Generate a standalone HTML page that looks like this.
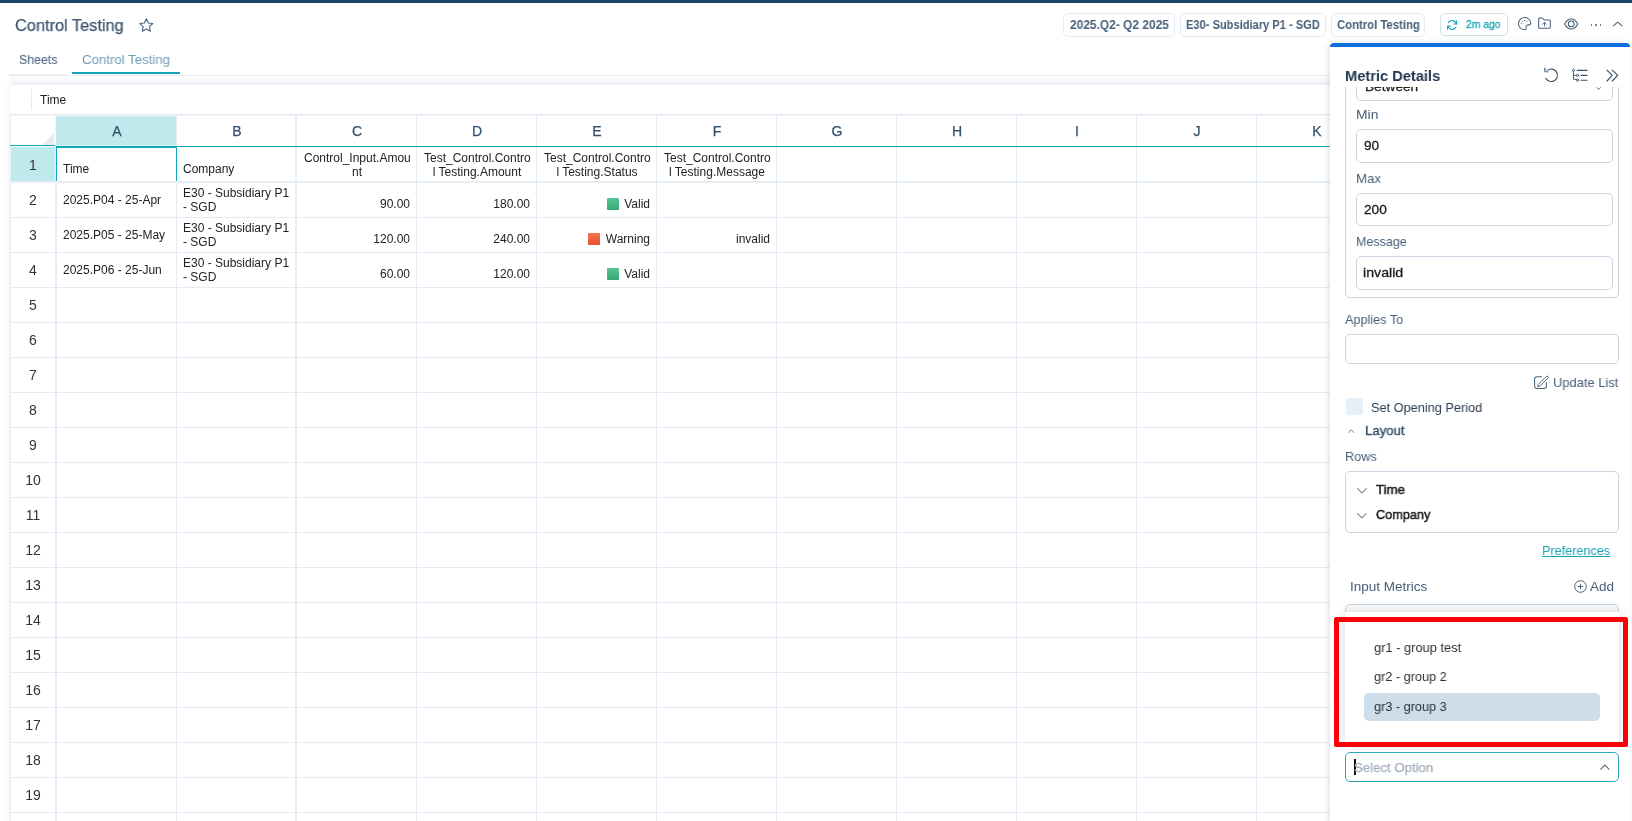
<!DOCTYPE html>
<html><head><meta charset="utf-8"><title>Control Testing</title>
<style>
html,body{margin:0;padding:0}
body{width:1632px;height:821px;overflow:hidden;position:relative;background:#fff;font-family:"Liberation Sans",sans-serif;color:#3f5a74}
.abs{position:absolute}
.t{position:absolute;white-space:nowrap;line-height:1;will-change:transform}
#topbar{left:0;top:0;width:1632px;height:3px;background:#1b4565}
.chip{position:absolute;top:13px;height:22px;border:1px solid #e3ecf5;border-radius:5px;background:#fff}
.chip .t{font-weight:bold;font-size:12.5px;color:#46607a;top:6px}
/* sheet */
#sheet{left:10px;top:85px;width:1330px;height:740px;background:#fff;box-shadow:0 0 9px rgba(120,150,180,.17)}
.vl{position:absolute;top:115px;width:1px;height:710px;background:#e3ecf5}
.hl{position:absolute;left:10px;width:1325px;height:1px;background:#e3ecf5}
.ch{will-change:transform;position:absolute;top:124px;width:120px;text-align:center;font-size:14px;color:#34506c;line-height:14px;-webkit-text-stroke:.25px #34506c;margin-left:.5px}
.rh{will-change:transform;position:absolute;left:11px;width:44px;text-align:center;font-size:14px;color:#333;line-height:14px}
.c{will-change:transform;position:absolute;font-size:12px;line-height:14px;color:#222;width:106px;white-space:nowrap}
.c.r{text-align:right;margin-left:1px}
.c.m{text-align:center;margin-left:1px}
/* panel */
#panel{left:1330px;top:43px;width:300px;height:790px;background:#fff;border-radius:5px 5px 0 0;box-shadow:-2px 0 6px rgba(100,130,160,.22);box-sizing:border-box}
.lab{position:absolute;white-space:nowrap;line-height:1;font-size:13.5px;color:#46607a}
.inp{position:absolute;box-sizing:border-box;border:1px solid #c9d6e2;border-radius:5px;background:#fff}
.val{position:absolute;white-space:nowrap;line-height:1;font-size:13.5px;color:#222;font-weight:500}
svg{position:absolute;overflow:visible}
</style></head><body>
<div id="topbar" class="abs"></div>

<div id="t1" class="t" style="left:14.85px;top:18.00px;font-size:16.75px;line-height:16.75px;color:#3d5873;-webkit-text-stroke:0.25px #3d5873;transform:scaleX(0.9757);transform-origin:0 0;">Control Testing</div>
<svg style="left:139.300px;top:17.700px" width="14.700" height="14.700" viewBox="0 0 14 14" fill="none" stroke="#46607a" stroke-width="1" stroke-linejoin="round"><path d="M7 .8l1.900 4 4.300.5-3.200 3 .85 4.300L7 10.500 3.150 12.600 4 8.300.8 5.300l4.300-.5z"/></svg>
<div id="t2" class="t" style="left:19.09px;top:53.00px;font-size:13.5px;line-height:13.5px;color:#536c85;-webkit-text-stroke:0.1px #536c85;transform:scaleX(0.9160);transform-origin:0 0;">Sheets</div>
<div id="t3" class="t" style="left:82.13px;top:53.00px;font-size:13.5px;line-height:13.5px;color:#6f9cb8;transform:scaleX(0.9805);transform-origin:0 0;">Control Testing</div>
<div class="abs" style="left:9px;top:74px;width:58px;height:2px;background:#e9eef5"></div>
<div class="abs" style="left:67px;top:75px;width:1263px;height:1px;background:#e9eff5"></div>
<div class="abs" style="left:72px;top:72px;width:108px;height:2px;background:#12a5b9"></div>
<div class="abs" style="left:10px;top:76px;width:1320px;height:9px;background:linear-gradient(#fefefe,#f6f8fa)"></div>
<div class="chip" style="left:1063px;width:110px"></div>
<div id="t4" class="t" style="left:1069.74px;top:19.00px;font-size:12.5px;line-height:12.5px;color:#46607a;font-weight:bold;transform:scaleX(0.9550);transform-origin:0 0;">2025.Q2- Q2 2025</div>
<div class="chip" style="left:1180px;width:144px"></div>
<div id="t5" class="t" style="left:1185.65px;top:19.00px;font-size:12.5px;line-height:12.5px;color:#46607a;font-weight:bold;transform:scaleX(0.8876);transform-origin:0 0;">E30- Subsidiary P1 - SGD</div>
<div class="chip" style="left:1331px;width:92px"></div>
<div id="t6" class="t" style="left:1336.81px;top:19.00px;font-size:12.5px;line-height:12.5px;color:#46607a;font-weight:bold;transform:scaleX(0.9060);transform-origin:0 0;">Control Testing</div>
<div class="chip" style="left:1440px;width:66px;height:20.600px;border-color:#d0e0e9"></div>
<div id="t7" class="t" style="left:1466.21px;top:19.00px;font-size:11.5px;line-height:11.5px;color:#17a5b8;-webkit-text-stroke:0.3px #17a5b8;transform:scaleX(0.8982);transform-origin:0 0;">2m ago</div>
<svg style="left:1446px;top:19px" width="12" height="12" viewBox="0 0 12 12" fill="none" stroke="#17a5b8" stroke-width="1.1" stroke-linecap="round" stroke-linejoin="round"><path d="M10.300 5A4.400 4.400 0 0 0 2.300 3.600M1.900 7A4.400 4.400 0 0 0 9.900 8.400"/><path d="M10.600 1.800V5H7.600M1.600 10.200V7h3"/></svg>
<svg style="left:1517.7px;top:17.4px" width="14" height="14" viewBox="0 0 14 14" fill="none" stroke="#46607a" stroke-width="1.05" stroke-linecap="round" stroke-linejoin="round"><path d="M6.300 12.800A6.150 6.150 0 1 1 12.800 6.900C12.500 8.300 10.500 7.600 8.800 8.200 7.200 8.900 8.600 10.600 8 11.900 7.700 12.600 7 12.800 6.300 12.800z"/><circle cx="3.300" cy="6.600" r=".55" fill="#46607a" stroke="none"/><circle cx="4.500" cy="4.300" r=".55" fill="#46607a" stroke="none"/><circle cx="6.700" cy="3.400" r=".55" fill="#46607a" stroke="none"/><circle cx="9" cy="4.200" r=".55" fill="#46607a" stroke="none"/></svg>
<svg style="left:1538px;top:17px" width="13" height="12" viewBox="0 0 13 12" fill="none" stroke="#46607a" stroke-width="1.05" stroke-linecap="round" stroke-linejoin="round"><path d="M.7 1.900Q.7 .9 1.700 .9H4.200L6.300 3H11.300Q12.300 3 12.300 4V10.300Q12.300 11.300 11.300 11.300H1.700Q.7 11.300 .7 10.300z"/><path d="M6.500 9V5.600M4.700 7.200L6.500 5.400 8.300 7.200" stroke-width=".9"/></svg>
<svg style="left:1564px;top:18px" width="15" height="12" viewBox="0 0 15 12" fill="none" stroke="#46607a" stroke-width="1.05" stroke-linecap="round" stroke-linejoin="round"><path d="M.7 5.900C2.500 2.300 5 .9 7.200 .9S11.900 2.300 13.700 5.900C11.900 9.500 9.400 10.900 7.200 10.900S2.500 9.500 .7 5.900z"/><circle cx="7.200" cy="5.900" r="2.900"/></svg>
<div class="abs" style="left:1590.5px;top:23.9px;width:1.7px;height:1.7px;border-radius:1px;background:#46607a"></div>
<div class="abs" style="left:1595.15px;top:23.9px;width:1.7px;height:1.7px;border-radius:1px;background:#46607a"></div>
<div class="abs" style="left:1599.8px;top:23.9px;width:1.7px;height:1.7px;border-radius:1px;background:#46607a"></div>
<svg style="left:1612px;top:21px" width="12" height="6" viewBox="0 0 12 6" fill="none" stroke="#46607a" stroke-width="1.05" stroke-linecap="round" stroke-linejoin="round"><path d="M1.300 4.800L5.700 1.100l4.400 3.700"/></svg>
<div id="sheet" class="abs"></div>
<div class="abs" style="left:31px;top:89px;width:1px;height:21px;background:#e3ecf5"></div>
<div class="t" style="left:40px;top:94px;font-size:12px;color:#222;line-height:12px">Time</div>
<div class="abs" style="left:10px;top:114px;width:1325px;height:1px;background:#e1eaf3"></div><div class="abs" style="left:10px;top:115px;width:1325px;height:1px;background:#f3f7fa"></div>
<div class="abs" style="left:56px;top:116px;width:120px;height:29px;background:#bfe9ed"></div><div class="abs" style="left:56px;top:145px;width:120px;height:1px;background:#d4f0f3"></div>
<div class="abs" style="left:11px;top:147px;width:44px;height:34px;background:#bfe9ed"></div>
<svg style="left:42.400px;top:132.700px" width="12" height="12" viewBox="0 0 12 12"><path d="M12 0V12H0z" fill="#e7ecf4"/></svg>
<div class="vl" style="left:55px;width:1px;background:#f1f5f9;height:32px"></div><div class="vl" style="left:55px;top:147px;width:2px;background:#e4edf5"></div><div class="vl" style="left:10px;width:1px;background:#e6eff6"></div>
<div class="vl" style="left:176px"></div>
<div class="vl" style="left:295px;width:2px;background:#e6eff6"></div>
<div class="vl" style="left:416px"></div>
<div class="vl" style="left:536px"></div>
<div class="vl" style="left:656px"></div>
<div class="vl" style="left:776px"></div>
<div class="vl" style="left:896px"></div>
<div class="vl" style="left:1016px"></div>
<div class="vl" style="left:1136px"></div>
<div class="vl" style="left:1256px"></div>
<div class="hl" style="top:181px;height:2px;background:#e6eff6"></div>
<div class="hl" style="top:217px"></div>
<div class="hl" style="top:252px"></div>
<div class="hl" style="top:287px"></div>
<div class="hl" style="top:322px"></div>
<div class="hl" style="top:357px"></div>
<div class="hl" style="top:392px"></div>
<div class="hl" style="top:427px"></div>
<div class="hl" style="top:462px"></div>
<div class="hl" style="top:497px"></div>
<div class="hl" style="top:532px"></div>
<div class="hl" style="top:567px"></div>
<div class="hl" style="top:602px"></div>
<div class="hl" style="top:637px"></div>
<div class="hl" style="top:672px"></div>
<div class="hl" style="top:707px"></div>
<div class="hl" style="top:742px"></div>
<div class="hl" style="top:777px"></div>
<div class="hl" style="top:812px"></div>
<div class="abs" style="left:10px;top:145px;width:45px;height:1px;background:#12a5b9"></div>
<div class="abs" style="left:56px;top:146px;width:1280px;height:1px;background:#12a5b9"></div>
<div class="abs" style="left:56px;top:146px;width:121px;height:35px;box-sizing:border-box;border:1.3px solid #12a5b9;border-top-width:2px;border-bottom:none"></div>
<div class="ch" style="left:56px">A</div>
<div class="ch" style="left:176px">B</div>
<div class="ch" style="left:296px">C</div>
<div class="ch" style="left:416px">D</div>
<div class="ch" style="left:536px">E</div>
<div class="ch" style="left:656px">F</div>
<div class="ch" style="left:776px">G</div>
<div class="ch" style="left:896px">H</div>
<div class="ch" style="left:1016px">I</div>
<div class="ch" style="left:1136px">J</div>
<div class="ch" style="left:1256px">K</div>
<div class="rh" style="top:158px">1</div>
<div class="rh" style="top:193px">2</div>
<div class="rh" style="top:228px">3</div>
<div class="rh" style="top:263px">4</div>
<div class="rh" style="top:298px">5</div>
<div class="rh" style="top:333px">6</div>
<div class="rh" style="top:368px">7</div>
<div class="rh" style="top:403px">8</div>
<div class="rh" style="top:438px">9</div>
<div class="rh" style="top:473px">10</div>
<div class="rh" style="top:508px">11</div>
<div class="rh" style="top:543px">12</div>
<div class="rh" style="top:578px">13</div>
<div class="rh" style="top:613px">14</div>
<div class="rh" style="top:648px">15</div>
<div class="rh" style="top:683px">16</div>
<div class="rh" style="top:718px">17</div>
<div class="rh" style="top:753px">18</div>
<div class="rh" style="top:788px">19</div>
<div class="c " style="left:63px;top:162px;">Time</div>
<div class="c " style="left:183px;top:162px;">Company</div>
<div class="c m" style="left:303px;top:151px;">Control_Input.Amou<br>nt</div>
<div class="c m" style="left:423px;top:151px;">Test_Control.Contro<br>l Testing.Amount</div>
<div class="c m" style="left:543px;top:151px;">Test_Control.Contro<br>l Testing.Status</div>
<div class="c m" style="left:663px;top:151px;">Test_Control.Contro<br>l Testing.Message</div>
<div class="c " style="left:63px;top:193px;">2025.P04 - 25-Apr</div>
<div class="c " style="left:183px;top:186px;">E30 - Subsidiary P1<br>- SGD</div>
<div class="c r" style="left:303px;top:197px;">90.00</div>
<div class="c r" style="left:423px;top:197px;">180.00</div>
<div class="c r" style="left:543px;top:197px;">Valid</div>
<div class="abs" style="left:607px;top:198px;width:12px;height:12px;border-radius:1px;background:linear-gradient(#56c596,#37a874)"></div>
<div class="c " style="left:63px;top:228px;">2025.P05 - 25-May</div>
<div class="c " style="left:183px;top:221px;">E30 - Subsidiary P1<br>- SGD</div>
<div class="c r" style="left:303px;top:232px;">120.00</div>
<div class="c r" style="left:423px;top:232px;">240.00</div>
<div class="c r" style="left:543px;top:232px;">Warning</div>
<div class="c r" style="left:663px;top:232px;">invalid</div>
<div class="abs" style="left:588px;top:233px;width:12px;height:12px;border-radius:1px;background:linear-gradient(#f4754b,#e8522f)"></div>
<div class="c " style="left:63px;top:263px;">2025.P06 - 25-Jun</div>
<div class="c " style="left:183px;top:256px;">E30 - Subsidiary P1<br>- SGD</div>
<div class="c r" style="left:303px;top:267px;">60.00</div>
<div class="c r" style="left:423px;top:267px;">120.00</div>
<div class="c r" style="left:543px;top:267px;">Valid</div>
<div class="abs" style="left:607px;top:268px;width:12px;height:12px;border-radius:1px;background:linear-gradient(#56c596,#37a874)"></div>
<div id="panel" class="abs"></div><div class="abs" style="left:1330px;top:43px;width:300px;height:4px;background:#0d6fdc;border-radius:5px 5px 0 0"></div>
<div class="abs" style="left:1630px;top:43px;width:2px;height:790px;background:#f8f9fb"></div>
<div id="t8" class="t" style="left:1344.77px;top:68.00px;font-size:15.5px;line-height:15.5px;color:#22384f;font-weight:bold;transform:scaleX(0.9445);transform-origin:0 0;">Metric Details</div>
<svg style="left:1543px;top:67.4px" width="16" height="15" viewBox="0 0 16 15" fill="none" stroke="#34506c" stroke-width="1.1" stroke-linecap="round" stroke-linejoin="round"><path d="M5.500 2.700A6.200 6.200 0 1 1 2.900 11.400"/><path d="M1.600 1.600V4.800H4.900z" stroke-width=".8"/></svg>
<svg style="left:1572px;top:68px" width="16" height="15" viewBox="0 0 16 15" fill="none" stroke="#34506c" stroke-width="1.1" stroke-linecap="round" stroke-linejoin="round"><path d="M5.300 2.400H15M9 7.400H15M9 12.200H15"/><path d="M1.500 3.600V11.300H4.300M1.500 7.400H4.300" stroke-width=".9"/><circle cx="1.500" cy="2.400" r="1.100" stroke-width=".9"/><circle cx="5.500" cy="7.400" r="1.100" stroke-width=".9"/><circle cx="5.500" cy="12.100" r="1.100" stroke-width=".9"/></svg>
<svg style="left:1606px;top:69px" width="13" height="13" viewBox="0 0 13 13" fill="none" stroke="#34506c" stroke-width="1.15" stroke-linecap="round" stroke-linejoin="round"><path d="M1 1.200l5.200 5.200L1 12M6.200 1.200l5.500 5.200L6.200 12"/></svg>
<div class="abs" style="left:1330px;top:87px;width:300px;height:740px;overflow:hidden">
<div class="inp" style="left:15px;top:-47px;width:274px;height:258px;border-color:#c5d3df"></div>
<div class="inp" style="left:26px;top:-27px;width:257px;height:41px"></div>
<div id="t9" class="t" style="left:34.60px;top:-7.00px;font-size:13.5px;line-height:13.5px;color:#222;-webkit-text-stroke:0.3px #222;transform:scaleX(1.0126);transform-origin:0 0;">Between</div>
<svg style="left:266px;top:-0.5px" width="5" height="3" viewBox="0 0 5 3" fill="none" stroke="#46607a" stroke-width=".9"><path d="M.4 .3L2.500 2.400 4.600 .3"/></svg>
<div id="t10" class="t" style="left:25.63px;top:21.00px;font-size:13.5px;line-height:13.5px;color:#46607a;transform:scaleX(1.0285);transform-origin:0 0;">Min</div>
<div class="inp" style="left:26px;top:42px;width:257px;height:34px"></div>
<div id="t11" class="t" style="left:34.47px;top:52.00px;font-size:13.5px;line-height:13.5px;color:#1c1c1c;-webkit-text-stroke:0.3px #1c1c1c;transform:scaleX(1.0055);transform-origin:0 0;">90</div>
<div id="t12" class="t" style="left:25.65px;top:85.00px;font-size:13.5px;line-height:13.5px;color:#46607a;transform:scaleX(0.9797);transform-origin:0 0;">Max</div>
<div class="inp" style="left:26px;top:106px;width:257px;height:33px"></div>
<div id="t13" class="t" style="left:33.77px;top:116.00px;font-size:13.5px;line-height:13.5px;color:#1c1c1c;-webkit-text-stroke:0.3px #1c1c1c;transform:scaleX(1.0107);transform-origin:0 0;">200</div>
<div id="t14" class="t" style="left:26.00px;top:148.00px;font-size:13.5px;line-height:13.5px;color:#46607a;transform:scaleX(0.9265);transform-origin:0 0;">Message</div>
<div class="inp" style="left:26px;top:169px;width:257px;height:34px"></div>
<div id="t15" class="t" style="left:33.44px;top:179.00px;font-size:13.5px;line-height:13.5px;color:#1c1c1c;-webkit-text-stroke:0.3px #1c1c1c;transform:scaleX(1.0516);transform-origin:0 0;">invalid</div>
<div id="t16" class="t" style="left:15.21px;top:226.00px;font-size:13.5px;line-height:13.5px;color:#46607a;transform:scaleX(0.9387);transform-origin:0 0;">Applies To</div>
<div class="inp" style="left:15px;top:247px;width:274px;height:30px"></div>
<svg style="left:204px;top:288px" width="15" height="14" viewBox="0 0 15 14" fill="none" stroke="#46607a" stroke-width="1.05" stroke-linecap="round" stroke-linejoin="round"><path d="M7.500 1.700H3Q.6 1.700 .6 4.100V11Q.6 13.400 3 13.400H10Q12.400 13.400 12.400 11V7.500"/><path d="M4.500 9.300L12.200 1.500Q13.100 .7 13.900 1.500T13.900 3.100L6.200 10.900 4.100 11.400z" stroke-width=".95"/></svg>
<div id="t17" class="t" style="left:223.44px;top:289.00px;font-size:13.5px;line-height:13.5px;color:#46607a;transform:scaleX(0.9575);transform-origin:0 0;">Update List</div>
<div class="abs" style="left:16px;top:311px;width:17px;height:17px;border-radius:3px;background:#e6f0f8"></div>
<div id="t18" class="t" style="left:41.42px;top:314.00px;font-size:13.5px;line-height:13.5px;color:#2b3b4a;transform:scaleX(0.9445);transform-origin:0 0;">Set Opening Period</div>
<svg style="left:17.5px;top:341.5px" width="7" height="5" viewBox="0 0 7 5" fill="none" stroke="#5b738b" stroke-width=".9"><path d="M.5 3.800L3.300 .9l2.800 2.900"/></svg>
<div id="t19" class="t" style="left:35.00px;top:337.00px;font-size:13.5px;line-height:13.5px;color:#34506c;-webkit-text-stroke:0.4px #34506c;transform:scaleX(0.9766);transform-origin:0 0;">Layout</div>
<div id="t20" class="t" style="left:14.92px;top:363.00px;font-size:13.5px;line-height:13.5px;color:#46607a;transform:scaleX(0.9435);transform-origin:0 0;">Rows</div>
<div class="inp" style="left:15px;top:384px;width:274px;height:62px"></div>
<svg style="left:27px;top:400.7px" width="10" height="6" viewBox="0 0 10 6" fill="none" stroke="#6f8aa0" stroke-width="1.100" stroke-linecap="round" stroke-linejoin="round"><path d="M.6 .6L4.900 4.900 9.200 .6"/></svg>
<div id="t21" class="t" style="left:46.24px;top:396.00px;font-size:13.5px;line-height:13.5px;color:#1c1c1c;-webkit-text-stroke:0.5px #1c1c1c;transform:scaleX(0.9813);transform-origin:0 0;">Time</div>
<svg style="left:27px;top:425.70000000000005px" width="10" height="6" viewBox="0 0 10 6" fill="none" stroke="#6f8aa0" stroke-width="1.100" stroke-linecap="round" stroke-linejoin="round"><path d="M.6 .6L4.900 4.900 9.200 .6"/></svg>
<div id="t22" class="t" style="left:46.38px;top:421.00px;font-size:13.5px;line-height:13.5px;color:#1c1c1c;-webkit-text-stroke:0.5px #1c1c1c;transform:scaleX(0.9407);transform-origin:0 0;">Company</div>
<div id="t23" class="t" style="left:212.07px;top:457.00px;font-size:13.5px;line-height:13.5px;color:#17a5b8;transform:scaleX(0.9358);transform-origin:0 0;text-decoration:underline;">Preferences</div>
<div id="t24" class="t" style="left:20.23px;top:493.00px;font-size:13.5px;line-height:13.5px;color:#46607a;transform:scaleX(0.9991);transform-origin:0 0;">Input Metrics</div>
<svg style="left:244px;top:493px" width="13" height="13" viewBox="0 0 13 13" fill="none" stroke="#46607a" stroke-width="1"><circle cx="6.500" cy="6.500" r="5.800"/><path d="M6.500 3.800v5.400M3.800 6.500h5.400"/></svg>
<div id="t25" class="t" style="left:260.29px;top:493.00px;font-size:13.5px;line-height:13.5px;color:#46607a;transform:scaleX(0.9905);transform-origin:0 0;">Add</div>
<div class="inp" style="left:15px;top:517px;width:274px;height:60px;background:#fafbfc"></div>
<div class="abs" style="left:15px;top:525px;width:274px;height:132px;background:#fff;box-shadow:0 0 11px rgba(70,90,110,.24)"></div>
<div class="abs" style="left:34px;top:606px;width:236px;height:28px;border-radius:5px;background:#cddeea"></div>
<div id="t26" class="t" style="left:44.30px;top:554.00px;font-size:13.5px;line-height:13.5px;color:#2a2f35;transform:scaleX(0.9525);transform-origin:0 0;">gr1 - group test</div>
<div id="t27" class="t" style="left:44.30px;top:583.00px;font-size:13.5px;line-height:13.5px;color:#2a2f35;transform:scaleX(0.9409);transform-origin:0 0;">gr2 - group 2</div>
<div id="t28" class="t" style="left:44.30px;top:613.00px;font-size:13.5px;line-height:13.5px;color:#2a2f35;transform:scaleX(0.9405);transform-origin:0 0;">gr3 - group 3</div>
<div class="abs" style="left:4px;top:530px;width:294px;height:130px;box-sizing:border-box;border:5px solid #fb0007;border-radius:2px"></div>
<div class="inp" style="left:15px;top:665px;width:274px;height:30px;border-color:#2aa9bb"></div>
<div class="abs" style="left:24.299999999999955px;top:672px;width:1.6px;height:16px;background:#111"></div>
<div id="t29" class="t" style="left:24.20px;top:674.00px;font-size:13.5px;line-height:13.5px;color:#a3aeb9;-webkit-text-stroke:0.25px #a3aeb9;transform:scaleX(0.9784);transform-origin:0 0;">Select Option</div>
<svg style="left:270.29999999999995px;top:677px" width="10" height="6" viewBox="0 0 10 6" fill="none" stroke="#46607a" stroke-width="1.100" stroke-linecap="round" stroke-linejoin="round"><path d="M.8 5.200L4.900 1.100l4.100 4.100"/></svg>
</div>
</body></html>
